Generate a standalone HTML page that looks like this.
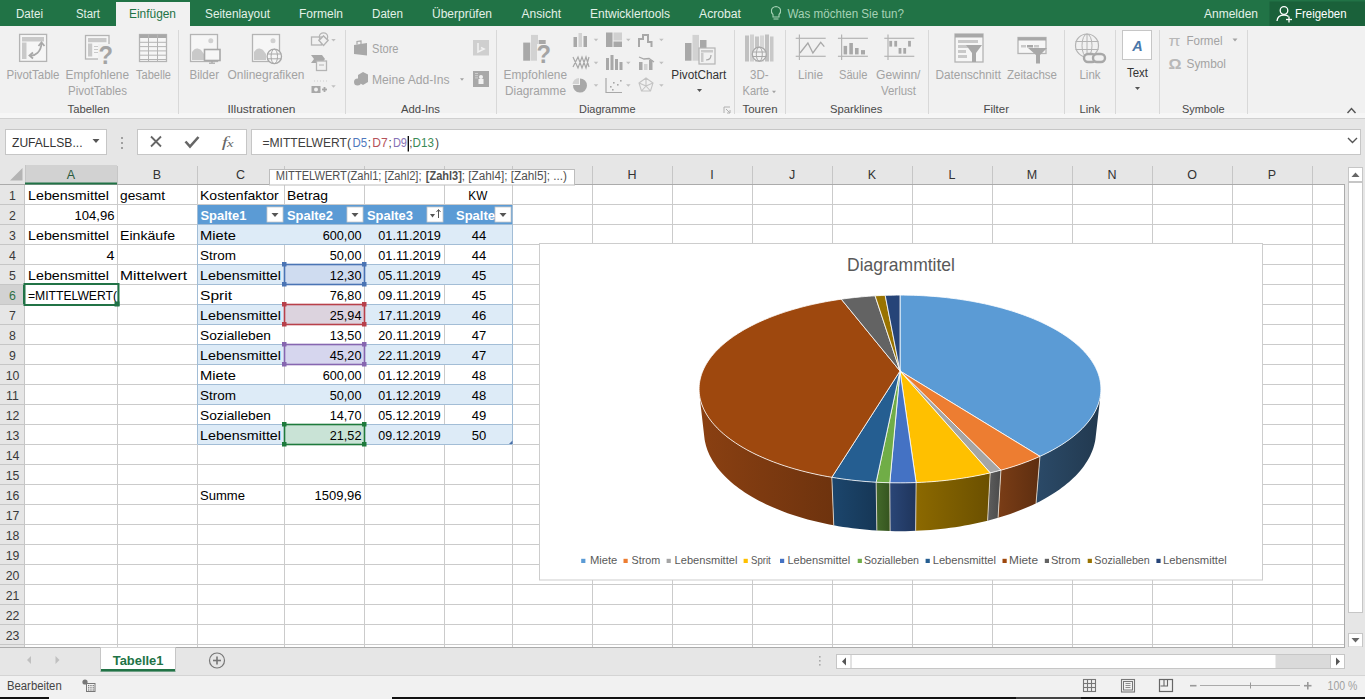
<!DOCTYPE html>
<html><head><meta charset="utf-8"><style>
html,body{margin:0;padding:0;width:1365px;height:699px;overflow:hidden;background:#fff}
svg{display:block;font-family:"Liberation Sans",sans-serif}
</style></head><body>
<svg width="1365" height="699" viewBox="0 0 1365 699">
<rect x="0" y="0" width="1365" height="26" fill="#217346"/>
<rect x="1269.5" y="1.5" width="95.5" height="24.5" fill="#1a613a"/>
<rect x="116" y="2" width="74" height="25" fill="#f1f1f1"/>
<text x="16.0" y="18.0" font-size="12.5" fill="#e3f1e8" textLength="27.0" lengthAdjust="spacingAndGlyphs">Datei</text>
<text x="76.0" y="18.0" font-size="12.5" fill="#e3f1e8" textLength="24.0" lengthAdjust="spacingAndGlyphs">Start</text>
<text x="205.0" y="18.0" font-size="12.5" fill="#e3f1e8" textLength="65.0" lengthAdjust="spacingAndGlyphs">Seitenlayout</text>
<text x="299.0" y="18.0" font-size="12.5" fill="#e3f1e8" textLength="44.0" lengthAdjust="spacingAndGlyphs">Formeln</text>
<text x="372.0" y="18.0" font-size="12.5" fill="#e3f1e8" textLength="31.0" lengthAdjust="spacingAndGlyphs">Daten</text>
<text x="432.0" y="18.0" font-size="12.5" fill="#e3f1e8" textLength="60.0" lengthAdjust="spacingAndGlyphs">Überprüfen</text>
<text x="521.5" y="18.0" font-size="12.5" fill="#e3f1e8" textLength="39.5" lengthAdjust="spacingAndGlyphs">Ansicht</text>
<text x="590.0" y="18.0" font-size="12.5" fill="#e3f1e8" textLength="80.0" lengthAdjust="spacingAndGlyphs">Entwicklertools</text>
<text x="699.0" y="18.0" font-size="12.5" fill="#e3f1e8" textLength="42.0" lengthAdjust="spacingAndGlyphs">Acrobat</text>
<text x="129.0" y="18.0" font-size="12.5" fill="#217346" textLength="47.0" lengthAdjust="spacingAndGlyphs">Einfügen</text>
<text x="787.5" y="18.0" font-size="12.5" fill="#a6d2b5" textLength="116.5" lengthAdjust="spacingAndGlyphs">Was möchten Sie tun?</text>
<text x="1204.0" y="18.0" font-size="12.5" fill="#e3f1e8" textLength="54.0" lengthAdjust="spacingAndGlyphs">Anmelden</text>
<text x="1295.0" y="18.0" font-size="12.5" fill="#ffffff" textLength="51.5" lengthAdjust="spacingAndGlyphs">Freigeben</text>
<path d="M773,14.5 C770.5,12.5 770.5,7 776,6.5 C781.5,7 781.5,12.5 779,14.5 L779,17 L773,17 Z" fill="none" stroke="#a6d2b5" stroke-width="1.1"/>
<line x1="773.5" y1="19" x2="778.5" y2="19" stroke="#a6d2b5" stroke-width="1.1"/>
<circle cx="1284" cy="10.5" r="3.8" fill="none" stroke="#fff" stroke-width="1.3"/>
<path d="M1277,21 C1277.5,16.5 1280,15 1284,15 C1286,15 1287.5,15.5 1288.5,16.5" fill="none" stroke="#fff" stroke-width="1.3"/>
<line x1="1286" y1="19.5" x2="1292" y2="19.5" stroke="#fff" stroke-width="1.3"/>
<line x1="1289" y1="16.5" x2="1289" y2="22.5" stroke="#fff" stroke-width="1.3"/>
<rect x="0" y="26" width="1365" height="92" fill="#f1f1f1"/>
<rect x="0" y="113" width="1365" height="5" fill="#f6f6f6"/>
<line x1="0" y1="118.5" x2="1365" y2="118.5" stroke="#d0d0d0" stroke-width="1"/>
<line x1="178.5" y1="30" x2="178.5" y2="114" stroke="#d8d8d8" stroke-width="1"/>
<line x1="345.5" y1="30" x2="345.5" y2="114" stroke="#d8d8d8" stroke-width="1"/>
<line x1="496.5" y1="30" x2="496.5" y2="114" stroke="#d8d8d8" stroke-width="1"/>
<line x1="734.5" y1="30" x2="734.5" y2="114" stroke="#d8d8d8" stroke-width="1"/>
<line x1="785.5" y1="30" x2="785.5" y2="114" stroke="#d8d8d8" stroke-width="1"/>
<line x1="928.5" y1="30" x2="928.5" y2="114" stroke="#d8d8d8" stroke-width="1"/>
<line x1="1064.5" y1="30" x2="1064.5" y2="114" stroke="#d8d8d8" stroke-width="1"/>
<line x1="1115.5" y1="30" x2="1115.5" y2="114" stroke="#d8d8d8" stroke-width="1"/>
<line x1="1159.5" y1="30" x2="1159.5" y2="114" stroke="#d8d8d8" stroke-width="1"/>
<line x1="1247.5" y1="30" x2="1247.5" y2="114" stroke="#d8d8d8" stroke-width="1"/>
<text x="67.5" y="113.4" font-size="11.3" fill="#4a4a4a" textLength="42.0" lengthAdjust="spacingAndGlyphs">Tabellen</text>
<text x="227.5" y="113.4" font-size="11.3" fill="#4a4a4a" textLength="68.0" lengthAdjust="spacingAndGlyphs">Illustrationen</text>
<text x="401.0" y="113.4" font-size="11.3" fill="#4a4a4a" textLength="39.0" lengthAdjust="spacingAndGlyphs">Add-Ins</text>
<text x="579.0" y="113.4" font-size="11.3" fill="#4a4a4a" textLength="56.5" lengthAdjust="spacingAndGlyphs">Diagramme</text>
<text x="742.5" y="113.4" font-size="11.3" fill="#4a4a4a" textLength="35.0" lengthAdjust="spacingAndGlyphs">Touren</text>
<text x="830.0" y="113.4" font-size="11.3" fill="#4a4a4a" textLength="52.5" lengthAdjust="spacingAndGlyphs">Sparklines</text>
<text x="983.5" y="113.4" font-size="11.3" fill="#4a4a4a" textLength="25.5" lengthAdjust="spacingAndGlyphs">Filter</text>
<text x="1079.5" y="113.4" font-size="11.3" fill="#4a4a4a" textLength="20.5" lengthAdjust="spacingAndGlyphs">Link</text>
<text x="1182.0" y="113.4" font-size="11.3" fill="#4a4a4a" textLength="42.5" lengthAdjust="spacingAndGlyphs">Symbole</text>
<text x="6.5" y="78.5" font-size="12" fill="#a3a3a3" textLength="53.0" lengthAdjust="spacingAndGlyphs">PivotTable</text>
<text x="65.5" y="78.5" font-size="12" fill="#a3a3a3" textLength="63.5" lengthAdjust="spacingAndGlyphs">Empfohlene</text>
<text x="68.0" y="94.5" font-size="12" fill="#a3a3a3" textLength="59.0" lengthAdjust="spacingAndGlyphs">PivotTables</text>
<text x="136.0" y="78.5" font-size="12" fill="#a3a3a3" textLength="35.0" lengthAdjust="spacingAndGlyphs">Tabelle</text>
<text x="189.5" y="78.5" font-size="12" fill="#a3a3a3" textLength="29.5" lengthAdjust="spacingAndGlyphs">Bilder</text>
<text x="227.5" y="78.5" font-size="12" fill="#a3a3a3" textLength="77.0" lengthAdjust="spacingAndGlyphs">Onlinegrafiken</text>
<text x="372.0" y="52.8" font-size="12" fill="#a3a3a3" textLength="26.5" lengthAdjust="spacingAndGlyphs">Store</text>
<text x="372.0" y="83.9" font-size="12" fill="#a3a3a3" textLength="77.5" lengthAdjust="spacingAndGlyphs">Meine Add-Ins</text>
<text x="503.5" y="79.0" font-size="12" fill="#a3a3a3" textLength="63.5" lengthAdjust="spacingAndGlyphs">Empfohlene</text>
<text x="505.0" y="95.0" font-size="12" fill="#a3a3a3" textLength="61.0" lengthAdjust="spacingAndGlyphs">Diagramme</text>
<text x="750.0" y="79.0" font-size="12" fill="#a3a3a3" textLength="18.5" lengthAdjust="spacingAndGlyphs">3D-</text>
<text x="742.5" y="95.0" font-size="12" fill="#a3a3a3" textLength="26.5" lengthAdjust="spacingAndGlyphs">Karte</text>
<text x="798.0" y="79.0" font-size="12" fill="#a3a3a3" textLength="25.0" lengthAdjust="spacingAndGlyphs">Linie</text>
<text x="839.0" y="79.0" font-size="12" fill="#a3a3a3" textLength="28.5" lengthAdjust="spacingAndGlyphs">Säule</text>
<text x="876.0" y="79.0" font-size="12" fill="#a3a3a3" textLength="44.5" lengthAdjust="spacingAndGlyphs">Gewinn/</text>
<text x="881.0" y="95.0" font-size="12" fill="#a3a3a3" textLength="35.0" lengthAdjust="spacingAndGlyphs">Verlust</text>
<text x="935.5" y="79.0" font-size="12" fill="#a3a3a3" textLength="65.5" lengthAdjust="spacingAndGlyphs">Datenschnitt</text>
<text x="1007.0" y="79.0" font-size="12" fill="#a3a3a3" textLength="50.0" lengthAdjust="spacingAndGlyphs">Zeitachse</text>
<text x="1079.5" y="79.0" font-size="12" fill="#a3a3a3" textLength="21.0" lengthAdjust="spacingAndGlyphs">Link</text>
<text x="1186.5" y="44.8" font-size="12" fill="#a3a3a3" textLength="36.0" lengthAdjust="spacingAndGlyphs">Formel</text>
<text x="1186.5" y="68.0" font-size="12" fill="#a3a3a3" textLength="39.5" lengthAdjust="spacingAndGlyphs">Symbol</text>
<text x="1127.0" y="76.5" font-size="12" fill="#333" textLength="21.0" lengthAdjust="spacingAndGlyphs">Text</text>
<text x="671.3" y="78.8" font-size="12" fill="#333" textLength="55.0" lengthAdjust="spacingAndGlyphs">PivotChart</text>
<path d="M697.0,89.0 L702.0,89.0 L699.5,92.0 Z" fill="#555"/>
<path d="M1135.0,87.0 L1140.0,87.0 L1137.5,90.0 Z" fill="#555"/>
<path d="M772.0,90.75 L776.0,90.75 L774,93.25 Z" fill="#a3a3a3"/>
<path d="M460.0,78.25 L464.0,78.25 L462,80.75 Z" fill="#a3a3a3"/>
<path d="M1232.5,38.5 L1237.5,38.5 L1235,41.5 Z" fill="#a3a3a3"/>
<path d="M1347.5,113 L1351.5,108.5 L1355.5,113" fill="none" stroke="#555" stroke-width="1.4"/>
<path d="M724,107 L730,107 M724,107 L724,113 M726,109 L730,113 M730,110 L730,113 L727,113" fill="none" stroke="#b0b0b0" stroke-width="1"/>
<rect x="0" y="119" width="1365" height="46" fill="#e6e6e6"/>
<rect x="5.5" y="129.5" width="101" height="25" fill="#fff" stroke="#c6c6c6" stroke-width="1"/>
<text x="12.0" y="146.8" font-size="12.5" fill="#333" textLength="70.5" lengthAdjust="spacingAndGlyphs">ZUFALLSB...</text>
<path d="M92.5,139.0 L99.5,139.0 L96,143.0 Z" fill="#555"/>
<rect x="121" y="137" width="2" height="2" fill="#a0a0a0"/>
<rect x="121" y="142" width="2" height="2" fill="#a0a0a0"/>
<rect x="121" y="147" width="2" height="2" fill="#a0a0a0"/>
<rect x="137.5" y="129.5" width="109" height="25" fill="#fff" stroke="#c6c6c6" stroke-width="1"/>
<path d="M151,136.5 L161,146.5 M161,136.5 L151,146.5" fill="none" stroke="#666" stroke-width="1.8"/>
<path d="M185.5,141.5 L190,146.5 L198.5,137" fill="none" stroke="#666" stroke-width="2.6"/>
<text x="221.8" y="147.0" font-size="14" fill="#666" textLength="6.0" lengthAdjust="spacingAndGlyphs" font-style="italic" font-family="Liberation Serif">f</text>
<text x="227.0" y="147.0" font-size="11" fill="#666" textLength="6.5" lengthAdjust="spacingAndGlyphs" font-style="italic" font-family="Liberation Serif">x</text>
<rect x="251.5" y="129.5" width="1109" height="25" fill="#fff" stroke="#c6c6c6" stroke-width="1"/>
<path d="M1348,138 L1352.5,142.5 L1357,138" fill="none" stroke="#555" stroke-width="1.4"/>
<rect x="0" y="165" width="1345" height="19" fill="#e6e6e6"/>
<rect x="25" y="165" width="92" height="19" fill="#d2d2d2"/>
<path d="M22.5,168 L22.5,180.5 L10,180.5 Z" fill="#b4b4b4"/>
<line x1="117.5" y1="166" x2="117.5" y2="184" stroke="#c6c6c6" stroke-width="1"/>
<line x1="197.5" y1="166" x2="197.5" y2="184" stroke="#c6c6c6" stroke-width="1"/>
<line x1="284.5" y1="166" x2="284.5" y2="184" stroke="#c6c6c6" stroke-width="1"/>
<line x1="364.5" y1="166" x2="364.5" y2="184" stroke="#c6c6c6" stroke-width="1"/>
<line x1="444.5" y1="166" x2="444.5" y2="184" stroke="#c6c6c6" stroke-width="1"/>
<line x1="512.5" y1="166" x2="512.5" y2="184" stroke="#c6c6c6" stroke-width="1"/>
<line x1="592.5" y1="166" x2="592.5" y2="184" stroke="#c6c6c6" stroke-width="1"/>
<line x1="672.5" y1="166" x2="672.5" y2="184" stroke="#c6c6c6" stroke-width="1"/>
<line x1="752.5" y1="166" x2="752.5" y2="184" stroke="#c6c6c6" stroke-width="1"/>
<line x1="832.5" y1="166" x2="832.5" y2="184" stroke="#c6c6c6" stroke-width="1"/>
<line x1="912.5" y1="166" x2="912.5" y2="184" stroke="#c6c6c6" stroke-width="1"/>
<line x1="992.5" y1="166" x2="992.5" y2="184" stroke="#c6c6c6" stroke-width="1"/>
<line x1="1072.5" y1="166" x2="1072.5" y2="184" stroke="#c6c6c6" stroke-width="1"/>
<line x1="1152.5" y1="166" x2="1152.5" y2="184" stroke="#c6c6c6" stroke-width="1"/>
<line x1="1232.5" y1="166" x2="1232.5" y2="184" stroke="#c6c6c6" stroke-width="1"/>
<line x1="1312.5" y1="166" x2="1312.5" y2="184" stroke="#c6c6c6" stroke-width="1"/>
<line x1="25.5" y1="165" x2="25.5" y2="184" stroke="#c6c6c6" stroke-width="1"/>
<line x1="0" y1="184.5" x2="1345" y2="184.5" stroke="#ababab" stroke-width="1"/>
<rect x="25" y="182.5" width="92" height="2" fill="#217346"/>
<text x="71.0" y="179.0" font-size="12.5" fill="#2a5a3c" text-anchor="middle">A</text>
<text x="157.0" y="179.0" font-size="12.5" fill="#333" text-anchor="middle">B</text>
<text x="240.5" y="179.0" font-size="12.5" fill="#333" text-anchor="middle">C</text>
<text x="324.0" y="179.0" font-size="12.5" fill="#333" text-anchor="middle">D</text>
<text x="404.0" y="179.0" font-size="12.5" fill="#333" text-anchor="middle">E</text>
<text x="478.0" y="179.0" font-size="12.5" fill="#333" text-anchor="middle">F</text>
<text x="552.0" y="179.0" font-size="12.5" fill="#333" text-anchor="middle">G</text>
<text x="632.0" y="179.0" font-size="12.5" fill="#333" text-anchor="middle">H</text>
<text x="712.0" y="179.0" font-size="12.5" fill="#333" text-anchor="middle">I</text>
<text x="792.0" y="179.0" font-size="12.5" fill="#333" text-anchor="middle">J</text>
<text x="872.0" y="179.0" font-size="12.5" fill="#333" text-anchor="middle">K</text>
<text x="952.0" y="179.0" font-size="12.5" fill="#333" text-anchor="middle">L</text>
<text x="1032.0" y="179.0" font-size="12.5" fill="#333" text-anchor="middle">M</text>
<text x="1112.0" y="179.0" font-size="12.5" fill="#333" text-anchor="middle">N</text>
<text x="1192.0" y="179.0" font-size="12.5" fill="#333" text-anchor="middle">O</text>
<text x="1272.0" y="179.0" font-size="12.5" fill="#333" text-anchor="middle">P</text>
<rect x="0" y="185" width="25" height="462" fill="#e6e6e6"/>
<rect x="0" y="285" width="25" height="19" fill="#d2d2d2"/>
<line x1="24.5" y1="185" x2="24.5" y2="647" stroke="#c6c6c6" stroke-width="1"/>
<line x1="0" y1="204.5" x2="25" y2="204.5" stroke="#c6c6c6" stroke-width="1"/>
<text x="12.5" y="200.3" font-size="12.3" fill="#3a3a3a" text-anchor="middle">1</text>
<line x1="0" y1="224.5" x2="25" y2="224.5" stroke="#c6c6c6" stroke-width="1"/>
<text x="12.5" y="220.3" font-size="12.3" fill="#3a3a3a" text-anchor="middle">2</text>
<line x1="0" y1="244.5" x2="25" y2="244.5" stroke="#c6c6c6" stroke-width="1"/>
<text x="12.5" y="240.3" font-size="12.3" fill="#3a3a3a" text-anchor="middle">3</text>
<line x1="0" y1="264.5" x2="25" y2="264.5" stroke="#c6c6c6" stroke-width="1"/>
<text x="12.5" y="260.3" font-size="12.3" fill="#3a3a3a" text-anchor="middle">4</text>
<line x1="0" y1="284.5" x2="25" y2="284.5" stroke="#c6c6c6" stroke-width="1"/>
<text x="12.5" y="280.3" font-size="12.3" fill="#3a3a3a" text-anchor="middle">5</text>
<line x1="0" y1="304.5" x2="25" y2="304.5" stroke="#c6c6c6" stroke-width="1"/>
<text x="12.5" y="300.3" font-size="12.3" fill="#2e7045" text-anchor="middle">6</text>
<line x1="0" y1="324.5" x2="25" y2="324.5" stroke="#c6c6c6" stroke-width="1"/>
<text x="12.5" y="320.3" font-size="12.3" fill="#3a3a3a" text-anchor="middle">7</text>
<line x1="0" y1="344.5" x2="25" y2="344.5" stroke="#c6c6c6" stroke-width="1"/>
<text x="12.5" y="340.3" font-size="12.3" fill="#3a3a3a" text-anchor="middle">8</text>
<line x1="0" y1="364.5" x2="25" y2="364.5" stroke="#c6c6c6" stroke-width="1"/>
<text x="12.5" y="360.3" font-size="12.3" fill="#3a3a3a" text-anchor="middle">9</text>
<line x1="0" y1="384.5" x2="25" y2="384.5" stroke="#c6c6c6" stroke-width="1"/>
<text x="12.5" y="380.3" font-size="12.3" fill="#3a3a3a" text-anchor="middle">10</text>
<line x1="0" y1="404.5" x2="25" y2="404.5" stroke="#c6c6c6" stroke-width="1"/>
<text x="12.5" y="400.3" font-size="12.3" fill="#3a3a3a" text-anchor="middle">11</text>
<line x1="0" y1="424.5" x2="25" y2="424.5" stroke="#c6c6c6" stroke-width="1"/>
<text x="12.5" y="420.3" font-size="12.3" fill="#3a3a3a" text-anchor="middle">12</text>
<line x1="0" y1="444.5" x2="25" y2="444.5" stroke="#c6c6c6" stroke-width="1"/>
<text x="12.5" y="440.3" font-size="12.3" fill="#3a3a3a" text-anchor="middle">13</text>
<line x1="0" y1="464.5" x2="25" y2="464.5" stroke="#c6c6c6" stroke-width="1"/>
<text x="12.5" y="460.3" font-size="12.3" fill="#3a3a3a" text-anchor="middle">14</text>
<line x1="0" y1="484.5" x2="25" y2="484.5" stroke="#c6c6c6" stroke-width="1"/>
<text x="12.5" y="480.3" font-size="12.3" fill="#3a3a3a" text-anchor="middle">15</text>
<line x1="0" y1="504.5" x2="25" y2="504.5" stroke="#c6c6c6" stroke-width="1"/>
<text x="12.5" y="500.3" font-size="12.3" fill="#3a3a3a" text-anchor="middle">16</text>
<line x1="0" y1="524.5" x2="25" y2="524.5" stroke="#c6c6c6" stroke-width="1"/>
<text x="12.5" y="520.3" font-size="12.3" fill="#3a3a3a" text-anchor="middle">17</text>
<line x1="0" y1="544.5" x2="25" y2="544.5" stroke="#c6c6c6" stroke-width="1"/>
<text x="12.5" y="540.3" font-size="12.3" fill="#3a3a3a" text-anchor="middle">18</text>
<line x1="0" y1="564.5" x2="25" y2="564.5" stroke="#c6c6c6" stroke-width="1"/>
<text x="12.5" y="560.3" font-size="12.3" fill="#3a3a3a" text-anchor="middle">19</text>
<line x1="0" y1="584.5" x2="25" y2="584.5" stroke="#c6c6c6" stroke-width="1"/>
<text x="12.5" y="580.3" font-size="12.3" fill="#3a3a3a" text-anchor="middle">20</text>
<line x1="0" y1="604.5" x2="25" y2="604.5" stroke="#c6c6c6" stroke-width="1"/>
<text x="12.5" y="600.3" font-size="12.3" fill="#3a3a3a" text-anchor="middle">21</text>
<line x1="0" y1="624.5" x2="25" y2="624.5" stroke="#c6c6c6" stroke-width="1"/>
<text x="12.5" y="620.3" font-size="12.3" fill="#3a3a3a" text-anchor="middle">22</text>
<line x1="0" y1="644.5" x2="25" y2="644.5" stroke="#c6c6c6" stroke-width="1"/>
<text x="12.5" y="640.3" font-size="12.3" fill="#3a3a3a" text-anchor="middle">23</text>
<rect x="23" y="285" width="2" height="19" fill="#217346"/>
<rect x="25.5" y="185" width="1320" height="462" fill="#ffffff"/>
<line x1="25" y1="204.5" x2="1345" y2="204.5" stroke="#cbcbcb" stroke-width="1"/>
<line x1="25" y1="224.5" x2="1345" y2="224.5" stroke="#cbcbcb" stroke-width="1"/>
<line x1="25" y1="244.5" x2="1345" y2="244.5" stroke="#cbcbcb" stroke-width="1"/>
<line x1="25" y1="264.5" x2="1345" y2="264.5" stroke="#cbcbcb" stroke-width="1"/>
<line x1="25" y1="284.5" x2="1345" y2="284.5" stroke="#cbcbcb" stroke-width="1"/>
<line x1="25" y1="304.5" x2="1345" y2="304.5" stroke="#cbcbcb" stroke-width="1"/>
<line x1="25" y1="324.5" x2="1345" y2="324.5" stroke="#cbcbcb" stroke-width="1"/>
<line x1="25" y1="344.5" x2="1345" y2="344.5" stroke="#cbcbcb" stroke-width="1"/>
<line x1="25" y1="364.5" x2="1345" y2="364.5" stroke="#cbcbcb" stroke-width="1"/>
<line x1="25" y1="384.5" x2="1345" y2="384.5" stroke="#cbcbcb" stroke-width="1"/>
<line x1="25" y1="404.5" x2="1345" y2="404.5" stroke="#cbcbcb" stroke-width="1"/>
<line x1="25" y1="424.5" x2="1345" y2="424.5" stroke="#cbcbcb" stroke-width="1"/>
<line x1="25" y1="444.5" x2="1345" y2="444.5" stroke="#cbcbcb" stroke-width="1"/>
<line x1="25" y1="464.5" x2="1345" y2="464.5" stroke="#cbcbcb" stroke-width="1"/>
<line x1="25" y1="484.5" x2="1345" y2="484.5" stroke="#cbcbcb" stroke-width="1"/>
<line x1="25" y1="504.5" x2="1345" y2="504.5" stroke="#cbcbcb" stroke-width="1"/>
<line x1="25" y1="524.5" x2="1345" y2="524.5" stroke="#cbcbcb" stroke-width="1"/>
<line x1="25" y1="544.5" x2="1345" y2="544.5" stroke="#cbcbcb" stroke-width="1"/>
<line x1="25" y1="564.5" x2="1345" y2="564.5" stroke="#cbcbcb" stroke-width="1"/>
<line x1="25" y1="584.5" x2="1345" y2="584.5" stroke="#cbcbcb" stroke-width="1"/>
<line x1="25" y1="604.5" x2="1345" y2="604.5" stroke="#cbcbcb" stroke-width="1"/>
<line x1="25" y1="624.5" x2="1345" y2="624.5" stroke="#cbcbcb" stroke-width="1"/>
<line x1="25" y1="644.5" x2="1345" y2="644.5" stroke="#cbcbcb" stroke-width="1"/>
<line x1="117.5" y1="185" x2="117.5" y2="647" stroke="#cbcbcb" stroke-width="1"/>
<line x1="197.5" y1="185" x2="197.5" y2="647" stroke="#cbcbcb" stroke-width="1"/>
<line x1="284.5" y1="185" x2="284.5" y2="647" stroke="#cbcbcb" stroke-width="1"/>
<line x1="364.5" y1="185" x2="364.5" y2="647" stroke="#cbcbcb" stroke-width="1"/>
<line x1="444.5" y1="185" x2="444.5" y2="647" stroke="#cbcbcb" stroke-width="1"/>
<line x1="512.5" y1="185" x2="512.5" y2="647" stroke="#cbcbcb" stroke-width="1"/>
<line x1="592.5" y1="185" x2="592.5" y2="647" stroke="#cbcbcb" stroke-width="1"/>
<line x1="672.5" y1="185" x2="672.5" y2="647" stroke="#cbcbcb" stroke-width="1"/>
<line x1="752.5" y1="185" x2="752.5" y2="647" stroke="#cbcbcb" stroke-width="1"/>
<line x1="832.5" y1="185" x2="832.5" y2="647" stroke="#cbcbcb" stroke-width="1"/>
<line x1="912.5" y1="185" x2="912.5" y2="647" stroke="#cbcbcb" stroke-width="1"/>
<line x1="992.5" y1="185" x2="992.5" y2="647" stroke="#cbcbcb" stroke-width="1"/>
<line x1="1072.5" y1="185" x2="1072.5" y2="647" stroke="#cbcbcb" stroke-width="1"/>
<line x1="1152.5" y1="185" x2="1152.5" y2="647" stroke="#cbcbcb" stroke-width="1"/>
<line x1="1232.5" y1="185" x2="1232.5" y2="647" stroke="#cbcbcb" stroke-width="1"/>
<line x1="1312.5" y1="185" x2="1312.5" y2="647" stroke="#cbcbcb" stroke-width="1"/>
<rect x="197.5" y="205" width="315" height="19" fill="#5b9bd5"/>
<rect x="197.5" y="225" width="315" height="20" fill="#ddebf7"/>
<rect x="197.5" y="245" width="315" height="20" fill="#ffffff"/>
<rect x="197.5" y="265" width="315" height="20" fill="#ddebf7"/>
<rect x="197.5" y="285" width="315" height="20" fill="#ffffff"/>
<rect x="197.5" y="305" width="315" height="20" fill="#ddebf7"/>
<rect x="197.5" y="325" width="315" height="20" fill="#ffffff"/>
<rect x="197.5" y="345" width="315" height="20" fill="#ddebf7"/>
<rect x="197.5" y="365" width="315" height="20" fill="#ffffff"/>
<rect x="197.5" y="385" width="315" height="20" fill="#ddebf7"/>
<rect x="197.5" y="405" width="315" height="20" fill="#ffffff"/>
<rect x="197.5" y="425" width="315" height="20" fill="#ddebf7"/>
<line x1="197.5" y1="224.5" x2="512.5" y2="224.5" stroke="#a2bdd6" stroke-width="1"/>
<line x1="197.5" y1="244.5" x2="512.5" y2="244.5" stroke="#a2bdd6" stroke-width="1"/>
<line x1="197.5" y1="264.5" x2="512.5" y2="264.5" stroke="#a2bdd6" stroke-width="1"/>
<line x1="197.5" y1="284.5" x2="512.5" y2="284.5" stroke="#a2bdd6" stroke-width="1"/>
<line x1="197.5" y1="304.5" x2="512.5" y2="304.5" stroke="#a2bdd6" stroke-width="1"/>
<line x1="197.5" y1="324.5" x2="512.5" y2="324.5" stroke="#a2bdd6" stroke-width="1"/>
<line x1="197.5" y1="344.5" x2="512.5" y2="344.5" stroke="#a2bdd6" stroke-width="1"/>
<line x1="197.5" y1="364.5" x2="512.5" y2="364.5" stroke="#a2bdd6" stroke-width="1"/>
<line x1="197.5" y1="384.5" x2="512.5" y2="384.5" stroke="#a2bdd6" stroke-width="1"/>
<line x1="197.5" y1="404.5" x2="512.5" y2="404.5" stroke="#a2bdd6" stroke-width="1"/>
<line x1="197.5" y1="424.5" x2="512.5" y2="424.5" stroke="#a2bdd6" stroke-width="1"/>
<line x1="197.5" y1="444.5" x2="512.5" y2="444.5" stroke="#a2bdd6" stroke-width="1"/>
<line x1="197.5" y1="205" x2="197.5" y2="444" stroke="#a2bdd6" stroke-width="1"/>
<line x1="512.5" y1="205" x2="512.5" y2="444" stroke="#a2bdd6" stroke-width="1"/>
<line x1="284.5" y1="245" x2="284.5" y2="264" stroke="#cbcbcb" stroke-width="1"/>
<line x1="284.5" y1="285" x2="284.5" y2="304" stroke="#cbcbcb" stroke-width="1"/>
<line x1="284.5" y1="325" x2="284.5" y2="344" stroke="#cbcbcb" stroke-width="1"/>
<line x1="284.5" y1="365" x2="284.5" y2="384" stroke="#cbcbcb" stroke-width="1"/>
<line x1="284.5" y1="405" x2="284.5" y2="424" stroke="#cbcbcb" stroke-width="1"/>
<line x1="364.5" y1="245" x2="364.5" y2="264" stroke="#cbcbcb" stroke-width="1"/>
<line x1="364.5" y1="285" x2="364.5" y2="304" stroke="#cbcbcb" stroke-width="1"/>
<line x1="364.5" y1="325" x2="364.5" y2="344" stroke="#cbcbcb" stroke-width="1"/>
<line x1="364.5" y1="365" x2="364.5" y2="384" stroke="#cbcbcb" stroke-width="1"/>
<line x1="364.5" y1="405" x2="364.5" y2="424" stroke="#cbcbcb" stroke-width="1"/>
<line x1="444.5" y1="245" x2="444.5" y2="264" stroke="#cbcbcb" stroke-width="1"/>
<line x1="444.5" y1="285" x2="444.5" y2="304" stroke="#cbcbcb" stroke-width="1"/>
<line x1="444.5" y1="325" x2="444.5" y2="344" stroke="#cbcbcb" stroke-width="1"/>
<line x1="444.5" y1="365" x2="444.5" y2="384" stroke="#cbcbcb" stroke-width="1"/>
<line x1="444.5" y1="405" x2="444.5" y2="424" stroke="#cbcbcb" stroke-width="1"/>
<rect x="267" y="207" width="16" height="15" fill="#ffffff" stroke="#c9c9c9" stroke-width="0.8"/>
<rect x="347" y="207" width="16" height="15" fill="#ffffff" stroke="#c9c9c9" stroke-width="0.8"/>
<rect x="427" y="207" width="16" height="15" fill="#ffffff" stroke="#c9c9c9" stroke-width="0.8"/>
<rect x="495" y="207" width="16" height="15" fill="#ffffff" stroke="#c9c9c9" stroke-width="0.8"/>
<path d="M271.5,213 L278.5,213 L275,217 Z" fill="#555"/>
<path d="M351.5,213 L358.5,213 L355,217 Z" fill="#555"/>
<path d="M499.5,213 L506.5,213 L503,217 Z" fill="#555"/>
<path d="M430,214 L435,214 L432.5,217.5 Z" fill="#555"/>
<line x1="438.5" y1="210" x2="438.5" y2="218" stroke="#555" stroke-width="1"/>
<path d="M436.5,212 L438.5,209.5 L440.5,212" fill="none" stroke="#555" stroke-width="1"/>
<text x="28.0" y="200.2" font-size="13.3" fill="#000" textLength="81.0" lengthAdjust="spacingAndGlyphs">Lebensmittel</text>
<text x="120.0" y="200.2" font-size="13.3" fill="#000" textLength="45.0" lengthAdjust="spacingAndGlyphs">gesamt</text>
<text x="200.0" y="200.2" font-size="13.3" fill="#000" textLength="78.7" lengthAdjust="spacingAndGlyphs">Kostenfaktor</text>
<text x="287.0" y="200.2" font-size="13.3" fill="#000" textLength="41.0" lengthAdjust="spacingAndGlyphs">Betrag</text>
<text x="468.3" y="200.2" font-size="13.3" fill="#000" textLength="19.0" lengthAdjust="spacingAndGlyphs">KW</text>
<text x="74.5" y="220.2" font-size="13.3" fill="#000" textLength="40.0" lengthAdjust="spacingAndGlyphs">104,96</text>
<text x="28.0" y="240.2" font-size="13.3" fill="#000" textLength="81.0" lengthAdjust="spacingAndGlyphs">Lebensmittel</text>
<text x="120.0" y="240.2" font-size="13.3" fill="#000" textLength="55.0" lengthAdjust="spacingAndGlyphs">Einkäufe</text>
<text x="106.5" y="260.2" font-size="13.3" fill="#000" textLength="8.0" lengthAdjust="spacingAndGlyphs">4</text>
<text x="28.0" y="280.2" font-size="13.3" fill="#000" textLength="81.0" lengthAdjust="spacingAndGlyphs">Lebensmittel</text>
<text x="120.0" y="280.2" font-size="13.3" fill="#000" textLength="67.0" lengthAdjust="spacingAndGlyphs">Mittelwert</text>
<text x="200.5" y="220.2" font-size="13.3" fill="#ffffff" font-weight="bold" textLength="46.0" lengthAdjust="spacingAndGlyphs">Spalte1</text>
<text x="287.0" y="220.2" font-size="13.3" fill="#ffffff" font-weight="bold" textLength="46.0" lengthAdjust="spacingAndGlyphs">Spalte2</text>
<text x="367.0" y="220.2" font-size="13.3" fill="#ffffff" font-weight="bold" textLength="46.0" lengthAdjust="spacingAndGlyphs">Spalte3</text>
<text x="456.0" y="220.2" font-size="13.3" fill="#ffffff" font-weight="bold" textLength="39.0" lengthAdjust="spacingAndGlyphs">Spalte</text>
<text x="200.0" y="240.2" font-size="13.3" fill="#000" textLength="36.0" lengthAdjust="spacingAndGlyphs">Miete</text>
<text x="322.7" y="240.2" font-size="13.3" fill="#000" textLength="38.8" lengthAdjust="spacingAndGlyphs">600,00</text>
<text x="378.3" y="240.2" font-size="13.3" fill="#000" textLength="62.5" lengthAdjust="spacingAndGlyphs">01.11.2019</text>
<text x="471.8" y="240.2" font-size="13.3" fill="#000" textLength="14.5" lengthAdjust="spacingAndGlyphs">44</text>
<text x="200.0" y="260.2" font-size="13.3" fill="#000" textLength="36.0" lengthAdjust="spacingAndGlyphs">Strom</text>
<text x="329.7" y="260.2" font-size="13.3" fill="#000" textLength="31.8" lengthAdjust="spacingAndGlyphs">50,00</text>
<text x="378.3" y="260.2" font-size="13.3" fill="#000" textLength="62.5" lengthAdjust="spacingAndGlyphs">01.11.2019</text>
<text x="471.8" y="260.2" font-size="13.3" fill="#000" textLength="14.5" lengthAdjust="spacingAndGlyphs">44</text>
<text x="200.0" y="280.2" font-size="13.3" fill="#000" textLength="81.0" lengthAdjust="spacingAndGlyphs">Lebensmittel</text>
<text x="329.7" y="280.2" font-size="13.3" fill="#000" textLength="31.8" lengthAdjust="spacingAndGlyphs">12,30</text>
<text x="378.3" y="280.2" font-size="13.3" fill="#000" textLength="62.5" lengthAdjust="spacingAndGlyphs">05.11.2019</text>
<text x="471.8" y="280.2" font-size="13.3" fill="#000" textLength="14.5" lengthAdjust="spacingAndGlyphs">45</text>
<text x="200.0" y="300.2" font-size="13.3" fill="#000" textLength="32.0" lengthAdjust="spacingAndGlyphs">Sprit</text>
<text x="329.7" y="300.2" font-size="13.3" fill="#000" textLength="31.8" lengthAdjust="spacingAndGlyphs">76,80</text>
<text x="378.3" y="300.2" font-size="13.3" fill="#000" textLength="62.5" lengthAdjust="spacingAndGlyphs">09.11.2019</text>
<text x="471.8" y="300.2" font-size="13.3" fill="#000" textLength="14.5" lengthAdjust="spacingAndGlyphs">45</text>
<text x="200.0" y="320.2" font-size="13.3" fill="#000" textLength="81.0" lengthAdjust="spacingAndGlyphs">Lebensmittel</text>
<text x="329.7" y="320.2" font-size="13.3" fill="#000" textLength="31.8" lengthAdjust="spacingAndGlyphs">25,94</text>
<text x="378.3" y="320.2" font-size="13.3" fill="#000" textLength="62.5" lengthAdjust="spacingAndGlyphs">17.11.2019</text>
<text x="471.8" y="320.2" font-size="13.3" fill="#000" textLength="14.5" lengthAdjust="spacingAndGlyphs">46</text>
<text x="200.0" y="340.2" font-size="13.3" fill="#000" textLength="71.0" lengthAdjust="spacingAndGlyphs">Sozialleben</text>
<text x="329.7" y="340.2" font-size="13.3" fill="#000" textLength="31.8" lengthAdjust="spacingAndGlyphs">13,50</text>
<text x="378.3" y="340.2" font-size="13.3" fill="#000" textLength="62.5" lengthAdjust="spacingAndGlyphs">20.11.2019</text>
<text x="471.8" y="340.2" font-size="13.3" fill="#000" textLength="14.5" lengthAdjust="spacingAndGlyphs">47</text>
<text x="200.0" y="360.2" font-size="13.3" fill="#000" textLength="81.0" lengthAdjust="spacingAndGlyphs">Lebensmittel</text>
<text x="329.7" y="360.2" font-size="13.3" fill="#000" textLength="31.8" lengthAdjust="spacingAndGlyphs">45,20</text>
<text x="378.3" y="360.2" font-size="13.3" fill="#000" textLength="62.5" lengthAdjust="spacingAndGlyphs">22.11.2019</text>
<text x="471.8" y="360.2" font-size="13.3" fill="#000" textLength="14.5" lengthAdjust="spacingAndGlyphs">47</text>
<text x="200.0" y="380.2" font-size="13.3" fill="#000" textLength="36.0" lengthAdjust="spacingAndGlyphs">Miete</text>
<text x="322.7" y="380.2" font-size="13.3" fill="#000" textLength="38.8" lengthAdjust="spacingAndGlyphs">600,00</text>
<text x="378.3" y="380.2" font-size="13.3" fill="#000" textLength="62.5" lengthAdjust="spacingAndGlyphs">01.12.2019</text>
<text x="471.8" y="380.2" font-size="13.3" fill="#000" textLength="14.5" lengthAdjust="spacingAndGlyphs">48</text>
<text x="200.0" y="400.2" font-size="13.3" fill="#000" textLength="36.0" lengthAdjust="spacingAndGlyphs">Strom</text>
<text x="329.7" y="400.2" font-size="13.3" fill="#000" textLength="31.8" lengthAdjust="spacingAndGlyphs">50,00</text>
<text x="378.3" y="400.2" font-size="13.3" fill="#000" textLength="62.5" lengthAdjust="spacingAndGlyphs">01.12.2019</text>
<text x="471.8" y="400.2" font-size="13.3" fill="#000" textLength="14.5" lengthAdjust="spacingAndGlyphs">48</text>
<text x="200.0" y="420.2" font-size="13.3" fill="#000" textLength="71.0" lengthAdjust="spacingAndGlyphs">Sozialleben</text>
<text x="329.7" y="420.2" font-size="13.3" fill="#000" textLength="31.8" lengthAdjust="spacingAndGlyphs">14,70</text>
<text x="378.3" y="420.2" font-size="13.3" fill="#000" textLength="62.5" lengthAdjust="spacingAndGlyphs">05.12.2019</text>
<text x="471.8" y="420.2" font-size="13.3" fill="#000" textLength="14.5" lengthAdjust="spacingAndGlyphs">49</text>
<text x="200.0" y="440.2" font-size="13.3" fill="#000" textLength="81.0" lengthAdjust="spacingAndGlyphs">Lebensmittel</text>
<text x="329.7" y="440.2" font-size="13.3" fill="#000" textLength="31.8" lengthAdjust="spacingAndGlyphs">21,52</text>
<text x="378.3" y="440.2" font-size="13.3" fill="#000" textLength="62.5" lengthAdjust="spacingAndGlyphs">09.12.2019</text>
<text x="471.8" y="440.2" font-size="13.3" fill="#000" textLength="14.5" lengthAdjust="spacingAndGlyphs">50</text>
<text x="200.0" y="500.2" font-size="13.3" fill="#000" textLength="45.0" lengthAdjust="spacingAndGlyphs">Summe</text>
<text x="314.5" y="500.2" font-size="13.3" fill="#000" textLength="47.0" lengthAdjust="spacingAndGlyphs">1509,96</text>
<path d="M509,444 L512.5,444 L512.5,440.5 Z" fill="#4a6fa8"/>
<rect x="539.5" y="243.5" width="723" height="336.5" fill="#ffffff" stroke="#cdcdcd" stroke-width="1"/>
<text x="847.0" y="271.0" font-size="18.5" fill="#595959" textLength="108.0" lengthAdjust="spacingAndGlyphs">Diagrammtitel</text>
<defs><linearGradient id="sg0" gradientUnits="userSpaceOnUse" x1="1036.1" y1="0" x2="1100.6" y2="0"><stop offset="0" stop-color="#2b4a68"/><stop offset="1" stop-color="#22394f"/></linearGradient><linearGradient id="sg1" gradientUnits="userSpaceOnUse" x1="998.1" y1="0" x2="1040.0" y2="0"><stop offset="0" stop-color="#7a3d16"/><stop offset="1" stop-color="#5e2e10"/></linearGradient><linearGradient id="sg2" gradientUnits="userSpaceOnUse" x1="987.6" y1="0" x2="1000.9" y2="0"><stop offset="0" stop-color="#5e5e5e"/><stop offset="1" stop-color="#4a4a4a"/></linearGradient><linearGradient id="sg3" gradientUnits="userSpaceOnUse" x1="915.6" y1="0" x2="990.2" y2="0"><stop offset="0" stop-color="#8c6900"/><stop offset="1" stop-color="#6b5000"/></linearGradient><linearGradient id="sg4" gradientUnits="userSpaceOnUse" x1="889.8" y1="0" x2="916.1" y2="0"><stop offset="0" stop-color="#2a4677"/><stop offset="1" stop-color="#1f355c"/></linearGradient><linearGradient id="sg5" gradientUnits="userSpaceOnUse" x1="876.2" y1="0" x2="890.1" y2="0"><stop offset="0" stop-color="#446a2b"/><stop offset="1" stop-color="#35541f"/></linearGradient><linearGradient id="sg6" gradientUnits="userSpaceOnUse" x1="831.8" y1="0" x2="876.8" y2="0"><stop offset="0" stop-color="#1c466d"/><stop offset="1" stop-color="#163756"/></linearGradient><linearGradient id="sg7" gradientUnits="userSpaceOnUse" x1="699.4" y1="0" x2="833.8" y2="0"><stop offset="0" stop-color="#8a4012"/><stop offset="1" stop-color="#6e330e"/></linearGradient></defs>
<path d="M1100.63,394.00 L1100.36,395.94 L1100.01,397.88 L1099.57,399.82 L1099.04,401.77 L1098.43,403.72 L1097.72,405.67 L1096.92,407.62 L1096.03,409.56 L1095.05,411.51 L1093.97,413.45 L1092.80,415.39 L1091.54,417.33 L1090.18,419.26 L1088.73,421.18 L1087.19,423.09 L1085.55,425.00 L1083.81,426.89 L1081.98,428.77 L1080.05,430.64 L1078.03,432.50 L1075.92,434.34 L1073.70,436.16 L1071.40,437.97 L1069.00,439.76 L1066.50,441.53 L1063.92,443.27 L1061.24,445.00 L1058.47,446.70 L1055.60,448.38 L1052.65,450.03 L1049.61,451.65 L1046.48,453.24 L1043.26,454.81 L1039.96,456.34 L1036.07,503.25 L1039.29,501.63 L1042.43,499.98 L1045.49,498.30 L1048.46,496.59 L1051.34,494.85 L1054.14,493.08 L1056.84,491.29 L1059.47,489.47 L1062.00,487.62 L1064.44,485.76 L1066.79,483.87 L1069.05,481.96 L1071.21,480.03 L1073.29,478.09 L1075.27,476.13 L1077.16,474.15 L1078.96,472.16 L1080.67,470.16 L1082.29,468.15 L1083.81,466.13 L1085.24,464.09 L1086.58,462.05 L1087.83,460.00 L1088.98,457.95 L1090.05,455.89 L1091.03,453.83 L1091.91,451.77 L1092.71,449.70 L1093.42,447.64 L1094.04,445.57 L1094.57,443.51 L1095.02,441.45 L1095.38,439.40 L1095.66,437.34 Z" fill="url(#sg0)"/>
<path d="M1039.96,456.34 L1036.44,457.90 L1032.83,459.42 L1029.13,460.91 L1025.35,462.36 L1021.48,463.76 L1017.53,465.13 L1013.50,466.45 L1009.39,467.73 L1005.20,468.97 L1000.95,470.16 L998.07,517.80 L1002.21,516.55 L1006.29,515.25 L1010.29,513.90 L1014.21,512.51 L1018.06,511.07 L1021.82,509.59 L1025.51,508.06 L1029.12,506.50 L1032.64,504.89 L1036.07,503.25 Z" fill="url(#sg1)"/>
<path d="M1000.95,470.16 L995.62,471.56 L990.18,472.88 L987.60,520.67 L992.89,519.27 L998.07,517.80 Z" fill="url(#sg2)"/>
<path d="M990.18,472.88 L985.58,473.93 L980.92,474.92 L976.20,475.85 L971.42,476.74 L966.59,477.56 L961.71,478.33 L956.78,479.04 L951.81,479.69 L946.79,480.29 L941.74,480.82 L936.66,481.29 L931.55,481.70 L926.42,482.05 L921.27,482.34 L916.10,482.57 L915.63,530.86 L920.65,530.62 L925.65,530.32 L930.64,529.95 L935.60,529.52 L940.53,529.02 L945.44,528.46 L950.31,527.84 L955.14,527.15 L959.93,526.40 L964.67,525.59 L969.37,524.72 L974.01,523.80 L978.60,522.81 L983.13,521.77 L987.60,520.67 Z" fill="url(#sg3)"/>
<path d="M916.10,482.57 L910.85,482.73 L905.59,482.83 L900.32,482.87 L895.06,482.84 L889.79,482.75 L890.09,531.05 L895.20,531.14 L900.31,531.17 L905.42,531.14 L910.53,531.03 L915.63,530.86 Z" fill="url(#sg4)"/>
<path d="M889.79,482.75 L882.96,482.53 L876.15,482.21 L876.85,530.48 L883.46,530.82 L890.09,531.05 Z" fill="url(#sg5)"/>
<path d="M876.15,482.21 L871.11,481.89 L866.08,481.52 L861.08,481.09 L856.11,480.60 L851.17,480.05 L846.27,479.45 L841.41,478.79 L836.59,478.07 L831.82,477.30 L833.78,525.31 L838.42,526.13 L843.10,526.88 L847.83,527.58 L852.59,528.21 L857.38,528.79 L862.21,529.30 L867.07,529.76 L871.95,530.15 L876.85,530.48 Z" fill="url(#sg6)"/>
<path d="M831.82,477.30 L827.21,476.49 L822.65,475.63 L818.14,474.72 L813.70,473.77 L809.31,472.76 L804.98,471.70 L800.71,470.60 L796.51,469.46 L792.38,468.27 L788.33,467.03 L784.34,465.75 L780.43,464.43 L776.60,463.07 L772.85,461.68 L769.18,460.24 L765.60,458.77 L762.10,457.26 L758.68,455.72 L755.36,454.14 L752.12,452.54 L748.97,450.90 L745.92,449.24 L742.96,447.54 L740.09,445.82 L737.32,444.08 L734.64,442.31 L732.06,440.52 L729.58,438.71 L727.19,436.88 L724.91,435.03 L722.72,433.16 L720.62,431.28 L718.63,429.38 L716.74,427.47 L714.94,425.54 L713.25,423.61 L711.65,421.66 L710.15,419.71 L708.74,417.74 L707.44,415.78 L706.23,413.80 L705.12,411.82 L704.11,409.84 L703.19,407.86 L702.36,405.88 L701.63,403.89 L701.00,401.91 L700.45,399.93 L700.00,397.95 L699.64,395.97 L699.37,394.00 L704.34,437.34 L704.62,439.43 L704.99,441.53 L705.45,443.62 L706.00,445.72 L706.64,447.82 L707.37,449.93 L708.19,452.03 L709.11,454.13 L710.12,456.23 L711.22,458.32 L712.41,460.41 L713.70,462.49 L715.09,464.57 L716.57,466.63 L718.14,468.69 L719.81,470.74 L721.58,472.77 L723.44,474.79 L725.39,476.80 L727.45,478.79 L729.59,480.76 L731.83,482.72 L734.17,484.65 L736.60,486.56 L739.13,488.45 L741.75,490.32 L744.46,492.16 L747.26,493.97 L750.15,495.76 L753.13,497.52 L756.20,499.24 L759.36,500.93 L762.61,502.59 L765.93,504.22 L769.35,505.81 L772.84,507.36 L776.42,508.87 L780.07,510.34 L783.80,511.78 L787.61,513.17 L791.49,514.51 L795.44,515.81 L799.46,517.06 L803.54,518.27 L807.69,519.43 L811.90,520.54 L816.17,521.60 L820.49,522.61 L824.87,523.56 L829.30,524.47 L833.78,525.31 Z" fill="url(#sg7)"/>
<line x1="1039.96" y1="456.34" x2="1036.07" y2="503.25" stroke="#f0e6d8" stroke-width="0.8"/>
<line x1="1000.95" y1="470.16" x2="998.07" y2="517.80" stroke="#f0e6d8" stroke-width="0.8"/>
<line x1="990.18" y1="472.88" x2="987.60" y2="520.67" stroke="#f0e6d8" stroke-width="0.8"/>
<line x1="916.10" y1="482.57" x2="915.63" y2="530.86" stroke="#f0e6d8" stroke-width="0.8"/>
<line x1="889.79" y1="482.75" x2="890.09" y2="531.05" stroke="#f0e6d8" stroke-width="0.8"/>
<line x1="876.15" y1="482.21" x2="876.85" y2="530.48" stroke="#f0e6d8" stroke-width="0.8"/>
<line x1="831.82" y1="477.30" x2="833.78" y2="525.31" stroke="#f0e6d8" stroke-width="0.8"/>
<path d="M900,371 L900.00,295.09 L903.33,295.11 L906.66,295.14 L909.99,295.21 L913.32,295.30 L916.65,295.42 L919.97,295.56 L923.29,295.73 L926.60,295.92 L929.91,296.14 L933.21,296.38 L936.50,296.65 L939.79,296.95 L943.06,297.27 L946.33,297.62 L949.59,298.00 L952.84,298.40 L956.07,298.82 L959.30,299.27 L962.51,299.75 L965.70,300.25 L968.89,300.78 L972.06,301.34 L975.21,301.92 L978.34,302.52 L981.46,303.16 L984.56,303.81 L987.64,304.49 L990.70,305.20 L993.74,305.94 L996.75,306.70 L999.75,307.48 L1002.72,308.29 L1005.67,309.13 L1008.59,309.99 L1011.48,310.87 L1014.35,311.78 L1017.19,312.72 L1020.01,313.68 L1022.79,314.67 L1025.54,315.68 L1028.26,316.71 L1030.95,317.77 L1033.61,318.86 L1036.23,319.97 L1038.81,321.10 L1041.36,322.26 L1043.87,323.44 L1046.35,324.65 L1048.78,325.88 L1051.17,327.14 L1053.52,328.42 L1055.83,329.72 L1058.10,331.04 L1060.32,332.39 L1062.49,333.76 L1064.62,335.15 L1066.70,336.57 L1068.73,338.01 L1070.71,339.47 L1072.64,340.95 L1074.51,342.45 L1076.33,343.98 L1078.10,345.52 L1079.81,347.09 L1081.46,348.68 L1083.06,350.28 L1084.59,351.91 L1086.07,353.56 L1087.48,355.22 L1088.83,356.90 L1090.11,358.60 L1091.33,360.32 L1092.48,362.06 L1093.56,363.81 L1094.57,365.58 L1095.52,367.36 L1096.39,369.16 L1097.19,370.97 L1097.91,372.80 L1098.56,374.64 L1099.13,376.50 L1099.63,378.36 L1100.04,380.24 L1100.38,382.13 L1100.64,384.03 L1100.81,385.94 L1100.90,387.85 L1100.91,389.78 L1100.83,391.71 L1100.67,393.65 L1100.42,395.60 L1100.08,397.55 L1099.65,399.50 L1099.14,401.46 L1098.53,403.41 L1097.83,405.37 L1097.04,407.33 L1096.16,409.29 L1095.18,411.25 L1094.11,413.20 L1092.95,415.16 L1091.69,417.10 L1090.34,419.04 L1088.89,420.97 L1087.35,422.90 L1085.71,424.81 L1083.97,426.72 L1082.14,428.61 L1080.21,430.49 L1078.19,432.36 L1076.07,434.21 L1073.85,436.05 L1071.54,437.86 L1069.13,439.66 L1066.63,441.44 L1064.03,443.20 L1061.34,444.93 L1058.56,446.64 L1055.68,448.33 L1052.72,449.99 L1049.66,451.62 L1046.51,453.23 L1043.28,454.80 L1039.96,456.34 Z" fill="#5b9bd5" stroke="#ffffff" stroke-width="0.8" stroke-linejoin="round"/>
<path d="M900,371 L1039.96,456.34 L1036.44,457.90 L1032.83,459.42 L1029.13,460.91 L1025.35,462.36 L1021.48,463.76 L1017.53,465.13 L1013.50,466.45 L1009.39,467.73 L1005.20,468.97 L1000.95,470.16 Z" fill="#ed7d31" stroke="#ffffff" stroke-width="0.8" stroke-linejoin="round"/>
<path d="M900,371 L1000.95,470.16 L995.62,471.56 L990.18,472.88 Z" fill="#a5a5a5" stroke="#ffffff" stroke-width="0.8" stroke-linejoin="round"/>
<path d="M900,371 L990.18,472.88 L985.58,473.93 L980.92,474.92 L976.20,475.85 L971.42,476.74 L966.59,477.56 L961.71,478.33 L956.78,479.04 L951.81,479.69 L946.79,480.29 L941.74,480.82 L936.66,481.29 L931.55,481.70 L926.42,482.05 L921.27,482.34 L916.10,482.57 Z" fill="#ffc000" stroke="#ffffff" stroke-width="0.8" stroke-linejoin="round"/>
<path d="M900,371 L916.10,482.57 L910.85,482.73 L905.59,482.83 L900.32,482.87 L895.06,482.84 L889.79,482.75 Z" fill="#4472c4" stroke="#ffffff" stroke-width="0.8" stroke-linejoin="round"/>
<path d="M900,371 L889.79,482.75 L882.96,482.53 L876.15,482.21 Z" fill="#70ad47" stroke="#ffffff" stroke-width="0.8" stroke-linejoin="round"/>
<path d="M900,371 L876.15,482.21 L871.11,481.89 L866.08,481.52 L861.08,481.09 L856.11,480.60 L851.17,480.05 L846.27,479.45 L841.41,478.79 L836.59,478.07 L831.82,477.30 Z" fill="#255e91" stroke="#ffffff" stroke-width="0.8" stroke-linejoin="round"/>
<path d="M900,371 L831.82,477.30 L827.27,476.50 L822.76,475.65 L818.31,474.76 L813.91,473.81 L809.57,472.82 L805.29,471.78 L801.08,470.70 L796.92,469.57 L792.84,468.40 L788.82,467.19 L784.88,465.93 L781.01,464.63 L777.21,463.30 L773.49,461.92 L769.85,460.51 L766.30,459.06 L762.82,457.58 L759.43,456.06 L756.13,454.52 L752.91,452.94 L749.78,451.33 L746.74,449.69 L743.79,448.03 L740.93,446.34 L738.16,444.62 L735.49,442.88 L732.91,441.12 L730.43,439.34 L728.04,437.54 L725.74,435.72 L723.54,433.88 L721.44,432.02 L719.43,430.15 L717.52,428.27 L715.71,426.37 L713.99,424.47 L712.36,422.55 L710.84,420.62 L709.41,418.69 L708.07,416.75 L706.83,414.80 L705.68,412.85 L704.63,410.90 L703.67,408.94 L702.81,406.98 L702.04,405.02 L701.35,403.06 L700.76,401.10 L700.26,399.15 L699.85,397.19 L699.53,395.24 L699.30,393.30 L699.15,391.36 L699.09,389.43 L699.11,387.51 L699.21,385.59 L699.40,383.68 L699.67,381.79 L700.02,379.90 L700.46,378.02 L700.96,376.16 L701.55,374.31 L702.21,372.47 L702.95,370.64 L703.76,368.83 L704.65,367.04 L705.60,365.25 L706.63,363.49 L707.73,361.74 L708.89,360.01 L710.12,358.29 L711.41,356.60 L712.77,354.92 L714.20,353.26 L715.68,351.61 L717.23,349.99 L718.83,348.39 L720.50,346.81 L722.22,345.24 L723.99,343.70 L725.82,342.18 L727.71,340.68 L729.65,339.20 L731.64,337.75 L733.67,336.31 L735.76,334.90 L737.90,333.51 L740.08,332.14 L742.31,330.80 L744.58,329.48 L746.90,328.18 L749.26,326.91 L751.66,325.66 L754.10,324.43 L756.58,323.23 L759.10,322.05 L761.65,320.90 L764.25,319.77 L766.87,318.66 L769.53,317.58 L772.23,316.52 L774.95,315.49 L777.71,314.49 L780.50,313.50 L783.32,312.55 L786.17,311.62 L789.04,310.71 L791.94,309.83 L794.87,308.97 L797.82,308.14 L800.79,307.34 L803.79,306.56 L806.81,305.80 L809.86,305.07 L812.92,304.37 L816.00,303.69 L819.10,303.04 L822.23,302.41 L825.36,301.81 L828.52,301.24 L831.69,300.69 L834.87,300.16 L838.07,299.66 L841.29,299.19 Z" fill="#9e480e" stroke="#ffffff" stroke-width="0.8" stroke-linejoin="round"/>
<path d="M900,371 L841.29,299.19 L844.62,298.73 L847.97,298.30 L851.33,297.89 L854.70,297.51 L858.08,297.16 L861.47,296.84 L864.86,296.54 L868.27,296.27 L871.68,296.03 L875.10,295.82 Z" fill="#636363" stroke="#ffffff" stroke-width="0.8" stroke-linejoin="round"/>
<path d="M900,371 L875.10,295.82 L878.46,295.63 L881.82,295.48 L885.19,295.35 Z" fill="#997300" stroke="#ffffff" stroke-width="0.8" stroke-linejoin="round"/>
<path d="M900,371 L885.19,295.35 L888.89,295.24 L892.59,295.16 L896.30,295.11 L900.00,295.09 Z" fill="#264478" stroke="#ffffff" stroke-width="0.8" stroke-linejoin="round"/>
<rect x="581.2" y="558.8" width="4.2" height="4.2" fill="#5b9bd5"/>
<text x="589.9" y="564.2" font-size="11" fill="#595959" textLength="27.4" lengthAdjust="spacingAndGlyphs">Miete</text>
<rect x="623.5" y="558.8" width="4.2" height="4.2" fill="#ed7d31"/>
<text x="631.5" y="564.2" font-size="11" fill="#595959" textLength="28.7" lengthAdjust="spacingAndGlyphs">Strom</text>
<rect x="666.6" y="558.8" width="4.2" height="4.2" fill="#a5a5a5"/>
<text x="674.6" y="564.2" font-size="11" fill="#595959" textLength="62.8" lengthAdjust="spacingAndGlyphs">Lebensmittel</text>
<rect x="743.6" y="558.8" width="4.2" height="4.2" fill="#ffc000"/>
<text x="751.0" y="564.2" font-size="11" fill="#595959" textLength="19.7" lengthAdjust="spacingAndGlyphs">Sprit</text>
<rect x="780" y="558.8" width="4.2" height="4.2" fill="#4472c4"/>
<text x="787.4" y="564.2" font-size="11" fill="#595959" textLength="62.8" lengthAdjust="spacingAndGlyphs">Lebensmittel</text>
<rect x="857.7" y="558.8" width="4.2" height="4.2" fill="#70ad47"/>
<text x="863.9" y="564.2" font-size="11" fill="#595959" textLength="55.1" lengthAdjust="spacingAndGlyphs">Sozialleben</text>
<rect x="925.6" y="558.8" width="4.2" height="4.2" fill="#255e91"/>
<text x="932.7" y="564.2" font-size="11" fill="#595959" textLength="63.3" lengthAdjust="spacingAndGlyphs">Lebensmittel</text>
<rect x="1002.5" y="558.8" width="4.2" height="4.2" fill="#9e480e"/>
<text x="1009.0" y="564.2" font-size="11" fill="#595959" textLength="29.0" lengthAdjust="spacingAndGlyphs">Miete</text>
<rect x="1044.8" y="558.8" width="4.2" height="4.2" fill="#636363"/>
<text x="1050.9" y="564.2" font-size="11" fill="#595959" textLength="29.6" lengthAdjust="spacingAndGlyphs">Strom</text>
<rect x="1087.7" y="558.8" width="4.2" height="4.2" fill="#997300"/>
<text x="1094.3" y="564.2" font-size="11" fill="#595959" textLength="55.5" lengthAdjust="spacingAndGlyphs">Sozialleben</text>
<rect x="1156.4" y="558.8" width="4.2" height="4.2" fill="#264478"/>
<text x="1163.0" y="564.2" font-size="11" fill="#595959" textLength="63.7" lengthAdjust="spacingAndGlyphs">Lebensmittel</text>
<rect x="285" y="265" width="79" height="19" fill="#cfdcf0"/>
<rect x="285" y="305" width="79" height="19" fill="#dcd3de"/>
<rect x="285" y="345" width="79" height="19" fill="#d6d6ee"/>
<rect x="285" y="425" width="79" height="19" fill="#c9e3d6"/>
<text x="329.7" y="280.2" font-size="13.3" fill="#000" textLength="31.8" lengthAdjust="spacingAndGlyphs">12,30</text>
<text x="329.7" y="320.2" font-size="13.3" fill="#000" textLength="31.8" lengthAdjust="spacingAndGlyphs">25,94</text>
<text x="329.7" y="360.2" font-size="13.3" fill="#000" textLength="31.8" lengthAdjust="spacingAndGlyphs">45,20</text>
<text x="329.7" y="440.2" font-size="13.3" fill="#000" textLength="31.8" lengthAdjust="spacingAndGlyphs">21,52</text>
<rect x="284.5" y="264.5" width="80" height="20" fill="none" stroke="#4a74b4" stroke-width="1.6"/>
<rect x="282" y="262" width="4.5" height="4.5" fill="#4a74b4"/>
<rect x="362" y="262" width="4.5" height="4.5" fill="#4a74b4"/>
<rect x="282" y="282" width="4.5" height="4.5" fill="#4a74b4"/>
<rect x="362" y="282" width="4.5" height="4.5" fill="#4a74b4"/>
<rect x="284.5" y="304.5" width="80" height="20" fill="none" stroke="#b8404a" stroke-width="1.6"/>
<rect x="282" y="302" width="4.5" height="4.5" fill="#b8404a"/>
<rect x="362" y="302" width="4.5" height="4.5" fill="#b8404a"/>
<rect x="282" y="322" width="4.5" height="4.5" fill="#b8404a"/>
<rect x="362" y="322" width="4.5" height="4.5" fill="#b8404a"/>
<rect x="284.5" y="344.5" width="80" height="20" fill="none" stroke="#8666b0" stroke-width="1.6"/>
<rect x="282" y="342" width="4.5" height="4.5" fill="#8666b0"/>
<rect x="362" y="342" width="4.5" height="4.5" fill="#8666b0"/>
<rect x="282" y="362" width="4.5" height="4.5" fill="#8666b0"/>
<rect x="362" y="362" width="4.5" height="4.5" fill="#8666b0"/>
<rect x="284.5" y="424.5" width="80" height="20" fill="none" stroke="#1e7a3c" stroke-width="1.6"/>
<rect x="282" y="422" width="4.5" height="4.5" fill="#1e7a3c"/>
<rect x="362" y="422" width="4.5" height="4.5" fill="#1e7a3c"/>
<rect x="282" y="442" width="4.5" height="4.5" fill="#1e7a3c"/>
<rect x="362" y="442" width="4.5" height="4.5" fill="#1e7a3c"/>
<rect x="25" y="285" width="92" height="19" fill="#ffffff"/>
<text x="28.0" y="300.2" font-size="13.3" fill="#000" textLength="89.0" lengthAdjust="spacingAndGlyphs">=MITTELWERT(</text>
<rect x="24.5" y="284" width="94" height="21" fill="none" stroke="#217346" stroke-width="2"/>
<rect x="114.5" y="301.5" width="5" height="5" fill="#217346"/>
<text x="262.5" y="146.8" font-size="12.8" fill="#404040" textLength="88.5" lengthAdjust="spacingAndGlyphs">=MITTELWERT(</text>
<text x="352.6" y="146.8" font-size="12.8" fill="#4f78bd" textLength="14.6" lengthAdjust="spacingAndGlyphs">D5</text>
<text x="367.8" y="146.8" font-size="12.8" fill="#404040" textLength="3.2" lengthAdjust="spacingAndGlyphs">;</text>
<text x="372.3" y="146.8" font-size="12.8" fill="#b5525a" textLength="15.4" lengthAdjust="spacingAndGlyphs">D7</text>
<text x="388.6" y="146.8" font-size="12.8" fill="#404040" textLength="3.2" lengthAdjust="spacingAndGlyphs">;</text>
<text x="392.9" y="146.8" font-size="12.8" fill="#8572b5" textLength="14.1" lengthAdjust="spacingAndGlyphs">D9</text>
<line x1="408.3" y1="136" x2="408.3" y2="151.5" stroke="#000" stroke-width="1.3"/>
<text x="409.2" y="146.8" font-size="12.8" fill="#404040" textLength="3.2" lengthAdjust="spacingAndGlyphs">;</text>
<text x="412.6" y="146.8" font-size="12.8" fill="#3a8a56" textLength="21.3" lengthAdjust="spacingAndGlyphs">D13</text>
<text x="435.3" y="146.8" font-size="12.8" fill="#404040" textLength="3.7" lengthAdjust="spacingAndGlyphs">)</text>
<rect x="269.5" y="169.5" width="305" height="15.5" fill="#ffffff" stroke="#bdbdbd" stroke-width="1"/>
<text x="275.8" y="179.7" font-size="12" fill="#505050" textLength="145.7" lengthAdjust="spacingAndGlyphs">MITTELWERT(Zahl1; [Zahl2];</text>
<text x="425.8" y="179.7" font-size="12" fill="#505050" font-weight="bold" textLength="36.0" lengthAdjust="spacingAndGlyphs">[Zahl3]</text>
<text x="461.8" y="179.7" font-size="12" fill="#505050" textLength="105.2" lengthAdjust="spacingAndGlyphs">; [Zahl4]; [Zahl5]; ...)</text>
<rect x="1345" y="165" width="20" height="482" fill="#e6e6e6"/>
<line x1="1344.5" y1="185" x2="1344.5" y2="647" stroke="#ababab" stroke-width="1"/>
<rect x="1348.5" y="167.5" width="14" height="14" fill="#ffffff" stroke="#c6c6c6" stroke-width="1"/>
<path d="M1351.5,177 L1355.5,172.5 L1359.5,177 Z" fill="#666"/>
<rect x="1348.5" y="182.5" width="14" height="430" fill="#ffffff" stroke="#c6c6c6" stroke-width="1"/>
<rect x="1348.5" y="633.5" width="14" height="13.5" fill="#ffffff" stroke="#c6c6c6" stroke-width="1"/>
<path d="M1351.5,638 L1359.5,638 L1355.5,642.5 Z" fill="#666"/>
<rect x="0" y="647" width="1365" height="28.5" fill="#e6e6e6"/>
<line x1="0" y1="647.5" x2="1345" y2="647.5" stroke="#ababab" stroke-width="1"/>
<path d="M31,656 L31,664 L27,660 Z" fill="#c0c0c0"/>
<path d="M55.5,656 L55.5,664 L59.5,660 Z" fill="#c0c0c0"/>
<rect x="100.5" y="647.5" width="75" height="23" fill="#ffffff"/>
<rect x="100.5" y="669" width="75" height="2.6" fill="#217346"/>
<line x1="100.5" y1="647" x2="100.5" y2="671" stroke="#c6c6c6" stroke-width="1"/>
<line x1="175.5" y1="647" x2="175.5" y2="671" stroke="#c6c6c6" stroke-width="1"/>
<text x="112.7" y="664.8" font-size="12.5" fill="#217346" font-weight="bold" textLength="50.8" lengthAdjust="spacingAndGlyphs">Tabelle1</text>
<circle cx="217" cy="660.5" r="7.5" fill="none" stroke="#777" stroke-width="1.2"/>
<line x1="213" y1="660.5" x2="221" y2="660.5" stroke="#777" stroke-width="1.6"/>
<line x1="217" y1="656.5" x2="217" y2="664.5" stroke="#777" stroke-width="1.6"/>
<rect x="819" y="656" width="1.6" height="1.6" fill="#aaa"/>
<rect x="819" y="660" width="1.6" height="1.6" fill="#aaa"/>
<rect x="819" y="664" width="1.6" height="1.6" fill="#aaa"/>
<rect x="836.5" y="654.5" width="508" height="14" fill="#ffffff" stroke="#c6c6c6" stroke-width="1"/>
<rect x="1275.5" y="655" width="55" height="13" fill="#dadada"/>
<line x1="851" y1="655" x2="851" y2="668" stroke="#c6c6c6" stroke-width="1"/>
<path d="M846,657.5 L846,665.5 L842,661.5 Z" fill="#555"/>
<rect x="1330.5" y="654.5" width="14" height="14" fill="#ffffff" stroke="#c6c6c6" stroke-width="1"/>
<path d="M1336,657.5 L1336,665.5 L1340,661.5 Z" fill="#555"/>
<rect x="0" y="675.5" width="1365" height="23.5" fill="#f1f1f1"/>
<line x1="0" y1="675.5" x2="1365" y2="675.5" stroke="#d4d4d4" stroke-width="1"/>
<text x="7.0" y="689.8" font-size="12" fill="#444" textLength="54.7" lengthAdjust="spacingAndGlyphs">Bearbeiten</text>
<circle cx="85" cy="682" r="2.6" fill="#777"/>
<rect x="86.5" y="683.5" width="8.5" height="8" fill="none" stroke="#777" stroke-width="1"/>
<rect x="88.0" y="685.0" width="1.3" height="1.2" fill="#777"/>
<rect x="90.3" y="685.0" width="1.3" height="1.2" fill="#777"/>
<rect x="92.6" y="685.0" width="1.3" height="1.2" fill="#777"/>
<rect x="88.0" y="687.2" width="1.3" height="1.2" fill="#777"/>
<rect x="90.3" y="687.2" width="1.3" height="1.2" fill="#777"/>
<rect x="92.6" y="687.2" width="1.3" height="1.2" fill="#777"/>
<rect x="88.0" y="689.4" width="1.3" height="1.2" fill="#777"/>
<rect x="90.3" y="689.4" width="1.3" height="1.2" fill="#777"/>
<rect x="92.6" y="689.4" width="1.3" height="1.2" fill="#777"/>
<rect x="0" y="697" width="49" height="2" fill="#111"/>
<rect x="392" y="697" width="624" height="2" fill="#111"/>
<rect x="1016" y="697" width="65" height="2" fill="#444"/>
<rect x="1081" y="697" width="284" height="2" fill="#111"/>
<rect x="1083.5" y="679.5" width="12" height="12" fill="none" stroke="#777" stroke-width="1.1"/>
<line x1="1087.5" y1="679.5" x2="1087.5" y2="691.5" stroke="#777" stroke-width="1.1"/>
<line x1="1083.5" y1="683.5" x2="1095.5" y2="683.5" stroke="#777" stroke-width="1.1"/>
<line x1="1091.5" y1="679.5" x2="1091.5" y2="691.5" stroke="#777" stroke-width="1.1"/>
<line x1="1083.5" y1="687.5" x2="1095.5" y2="687.5" stroke="#777" stroke-width="1.1"/>
<rect x="1121.5" y="679.5" width="13" height="12.5" fill="none" stroke="#777" stroke-width="1.1"/>
<rect x="1123.5" y="681.5" width="9" height="8.5" fill="none" stroke="#777" stroke-width="1"/>
<line x1="1125.5" y1="683.5" x2="1130.5" y2="683.5" stroke="#777" stroke-width="0.8"/>
<line x1="1125.5" y1="685.5" x2="1130.5" y2="685.5" stroke="#777" stroke-width="0.8"/>
<line x1="1125.5" y1="687.5" x2="1130.5" y2="687.5" stroke="#777" stroke-width="0.8"/>
<rect x="1159.5" y="679.5" width="13" height="12" fill="none" stroke="#666" stroke-width="1.2"/>
<path d="M1160.5,686 L1167.5,686 L1167.5,679.5 M1164,679.5 L1164,686" fill="none" stroke="#666" stroke-width="1.1"/>
<line x1="1190" y1="685.7" x2="1196.5" y2="685.7" stroke="#999" stroke-width="1.6"/>
<line x1="1200" y1="685.5" x2="1300" y2="685.5" stroke="#aaa" stroke-width="1"/>
<line x1="1250.5" y1="682.5" x2="1250.5" y2="688.5" stroke="#999" stroke-width="1"/>
<line x1="1304" y1="685.7" x2="1311.5" y2="685.7" stroke="#999" stroke-width="1.6"/>
<line x1="1307.8" y1="682" x2="1307.8" y2="689.5" stroke="#999" stroke-width="1.6"/>
<text x="1327.6" y="689.8" font-size="12" fill="#a0a0a0" textLength="29.7" lengthAdjust="spacingAndGlyphs">100 %</text>
<rect x="19.6" y="34.4" width="27" height="27" fill="#f6f6f6" stroke="#b4b4b4" stroke-width="1.3"/>
<rect x="22" y="37" width="22" height="4.5" fill="#c9c9c9"/>
<rect x="22" y="42.5" width="4.5" height="16.5" fill="#c9c9c9"/>
<path d="M30.5,55.5 C35,56 41,52 41.5,43.5" fill="none" stroke="#a8a8a8" stroke-width="1.8"/>
<path d="M38.5,46 L41.5,42.5 L44.5,46" fill="none" stroke="#a8a8a8" stroke-width="1.8"/>
<path d="M33,52.5 L29.5,55.5 L33,58.5" fill="none" stroke="#a8a8a8" stroke-width="1.8"/>
<rect x="85.5" y="35.5" width="23.5" height="23.5" fill="#f6f6f6" stroke="#b4b4b4" stroke-width="1.3"/>
<rect x="88" y="38" width="18.5" height="4.2" fill="#c9c9c9"/>
<rect x="88" y="43.5" width="4.2" height="13" fill="#c9c9c9"/>
<line x1="94" y1="46.5" x2="102" y2="46.5" stroke="#c9c9c9" stroke-width="1"/>
<line x1="94" y1="49.5" x2="102" y2="49.5" stroke="#c9c9c9" stroke-width="1"/>
<line x1="94" y1="52.5" x2="102" y2="52.5" stroke="#c9c9c9" stroke-width="1"/>
<rect x="98" y="44" width="15" height="19" fill="#f1f1f1"/>
<text x="98.4" y="63.6" font-size="26" fill="#a4a4a4" font-weight="bold" textLength="14.5" lengthAdjust="spacingAndGlyphs">?</text>
<rect x="139.5" y="34.5" width="27" height="27" fill="#f6f6f6" stroke="#b4b4b4" stroke-width="1.3"/>
<rect x="139.5" y="34.5" width="27" height="3.5" fill="#a8a8a8"/>
<line x1="148.5" y1="34.5" x2="148.5" y2="61.5" stroke="#b4b4b4" stroke-width="1"/>
<line x1="157.5" y1="34.5" x2="157.5" y2="61.5" stroke="#b4b4b4" stroke-width="1"/>
<line x1="139.5" y1="42.3" x2="166.5" y2="42.3" stroke="#b4b4b4" stroke-width="1"/>
<line x1="139.5" y1="46.6" x2="166.5" y2="46.6" stroke="#b4b4b4" stroke-width="1"/>
<line x1="139.5" y1="50.9" x2="166.5" y2="50.9" stroke="#b4b4b4" stroke-width="1"/>
<line x1="139.5" y1="55.2" x2="166.5" y2="55.2" stroke="#b4b4b4" stroke-width="1"/>
<line x1="139.5" y1="59.5" x2="166.5" y2="59.5" stroke="#b4b4b4" stroke-width="1"/>
<rect x="190.5" y="34.5" width="27" height="27" fill="#f6f6f6" stroke="#b4b4b4" stroke-width="1.3"/>
<path d="M192,60 L192,52 C195,48 197,47.5 201,50 L204,54 L204,60 Z" fill="#c9c9c9"/>
<circle cx="210.8" cy="40.7" r="2.5" fill="#d0d0d0"/>
<rect x="204.5" y="49.5" width="15.5" height="11" fill="#f6f6f6" stroke="#a8a8a8" stroke-width="1.6"/>
<line x1="212" y1="60.5" x2="212" y2="63" stroke="#a8a8a8" stroke-width="1.3"/>
<line x1="209" y1="63.2" x2="215" y2="63.2" stroke="#a8a8a8" stroke-width="1.2"/>
<rect x="252.5" y="34.5" width="27" height="27" fill="#f6f6f6" stroke="#b4b4b4" stroke-width="1.3"/>
<path d="M254,60 L254,52 C257,48 259,47.5 263,50 L266,54 L266,60 Z" fill="#c9c9c9"/>
<circle cx="273" cy="40.7" r="2.5" fill="#d0d0d0"/>
<circle cx="274.3" cy="56.4" r="7.2" fill="#f6f6f6" stroke="#a8a8a8" stroke-width="1.3"/>
<ellipse cx="274.3" cy="56.4" rx="3.2" ry="7.2" fill="none" stroke="#a8a8a8" stroke-width="1"/>
<line x1="267.2" y1="54" x2="281.4" y2="54" stroke="#a8a8a8" stroke-width="1"/>
<line x1="267.2" y1="58.8" x2="281.4" y2="58.8" stroke="#a8a8a8" stroke-width="1"/>
<rect x="311.5" y="37" width="10" height="8" fill="none" stroke="#b4b4b4" stroke-width="1.3"/>
<circle cx="323.5" cy="37" r="4.2" fill="none" stroke="#b4b4b4" stroke-width="1.2"/>
<path d="M319,40 L323.5,36 L328,40 L323.5,45 Z" fill="#f1f1f1" stroke="#b4b4b4" stroke-width="1.3"/>
<path d="M319,40.5 L323.5,36 L328,40.5 L323.5,45.5 Z" fill="#f1f1f1" stroke="#b4b4b4" stroke-width="1.3"/>
<path d="M331.25,38.95 L335.75,38.95 L333.5,41.45 Z" fill="#c0c0c0"/>
<path d="M311,55 L322,55 L325,59 L322,63 L311,63 L314,59 Z" fill="#a8a8a8"/>
<rect x="316.5" y="61" width="10" height="9.5" fill="#f1f1f1" stroke="#b4b4b4" stroke-width="1.3"/>
<line x1="319" y1="65" x2="324" y2="65" stroke="#b4b4b4" stroke-width="1"/>
<rect x="314" y="80.5" width="1" height="1" fill="#cfcfcf"/>
<rect x="317" y="80.5" width="1" height="1" fill="#cfcfcf"/>
<rect x="320" y="80.5" width="1" height="1" fill="#cfcfcf"/>
<rect x="323" y="80.5" width="1" height="1" fill="#cfcfcf"/>
<rect x="326" y="80.5" width="1" height="1" fill="#cfcfcf"/>
<rect x="311.5" y="86" width="9" height="7" fill="#a8a8a8"/>
<circle cx="316" cy="89.5" r="2" fill="#f1f1f1"/>
<line x1="322" y1="89.5" x2="327" y2="89.5" stroke="#a8a8a8" stroke-width="1.8"/>
<line x1="324.5" y1="87" x2="324.5" y2="92" stroke="#a8a8a8" stroke-width="1.8"/>
<path d="M331.25,85.35 L335.75,85.35 L333.5,87.85 Z" fill="#c0c0c0"/>
<path d="M354,45 L367,43 L367,55.5 L354,54 Z" fill="#a8a8a8"/>
<path d="M357,44.5 L357,41.5 L361,41 L361,44" fill="none" stroke="#a8a8a8" stroke-width="1.2"/>
<path d="M358,75 L363,72 L368,74.5 L368,82 L363,85 L358,82 Z" fill="#a8a8a8"/>
<circle cx="357.5" cy="82" r="3.5" fill="#a8a8a8"/>
<rect x="473" y="40" width="16" height="15.5" fill="#cfcfcf"/>
<path d="M478,43 L478,52 L484,49 L481,47.5" fill="none" stroke="#f1f1f1" stroke-width="1.6"/>
<rect x="473" y="71" width="16" height="16" fill="#a8a8a8"/>
<circle cx="481" cy="77" r="2" fill="#f1f1f1"/>
<rect x="478.5" y="79" width="5" height="5" fill="#f1f1f1"/>
<line x1="475" y1="73.5" x2="478" y2="73.5" stroke="#d8d8d8" stroke-width="0.8"/>
<line x1="475" y1="75.7" x2="478" y2="75.7" stroke="#d8d8d8" stroke-width="0.8"/>
<line x1="475" y1="77.9" x2="478" y2="77.9" stroke="#d8d8d8" stroke-width="0.8"/>
<rect x="523.2" y="42.6" width="7" height="18.1" fill="#a8a8a8"/>
<rect x="531" y="34.9" width="7" height="25.8" fill="#d2d2d2"/>
<rect x="538.7" y="40" width="7" height="20.7" fill="#a8a8a8"/>
<rect x="537" y="44" width="14" height="19" fill="#f1f1f1"/>
<text x="536.5" y="63.3" font-size="26" fill="#a4a4a4" font-weight="bold" textLength="14.5" lengthAdjust="spacingAndGlyphs">?</text>
<rect x="573.5" y="37" width="3.5" height="10" fill="#a8a8a8"/>
<rect x="578.5" y="33" width="3.5" height="14" fill="#d2d2d2"/>
<rect x="583.5" y="36" width="3.5" height="11" fill="#a8a8a8"/>
<rect x="606" y="32.5" width="6.5" height="14.5" fill="#a8a8a8"/>
<rect x="613.5" y="32.5" width="8.5" height="8" fill="#d0d0d0"/>
<rect x="613.5" y="41.5" width="8.5" height="5.5" fill="#a8a8a8"/>
<path d="M639,47 L639,39 L643,39 L643,35 L648,35 L648,42 L651.5,42 L651.5,47" fill="none" stroke="#a8a8a8" stroke-width="2"/>
<path d="M573,57 L578,68 L582,57 L586,68 L589,57 M573,67 L578,57 L582,68 L586,57 L589,67" fill="none" stroke="#a8a8a8" stroke-width="1.2"/>
<rect x="606" y="58" width="3" height="12" fill="#a8a8a8"/>
<rect x="610.5" y="55" width="3" height="15" fill="#a8a8a8"/>
<rect x="615" y="59" width="3" height="11" fill="#a8a8a8"/>
<rect x="619.5" y="62" width="3" height="8" fill="#a8a8a8"/>
<rect x="639" y="62" width="3.5" height="8" fill="#a8a8a8"/>
<rect x="644" y="64" width="3.5" height="6" fill="#d2d2d2"/>
<rect x="649" y="60" width="3.5" height="10" fill="#a8a8a8"/>
<path d="M639,57 L644,59 L649,58.5 L654,62" fill="none" stroke="#a8a8a8" stroke-width="1.3"/>
<path d="M580,85 L580,78.5 A7,7 0 1 1 573,85 Z" fill="#a8a8a8"/>
<path d="M579,84 L579,78 A6.5,6.5 0 0 0 572.5,84 Z" fill="#d2d2d2"/>
<path d="M606,78 L606,92.5 L622,92.5" fill="none" stroke="#a8a8a8" stroke-width="1.2"/>
<rect x="610" y="86" width="1.6" height="1.6" fill="#a8a8a8"/>
<rect x="613" y="82" width="1.6" height="1.6" fill="#a8a8a8"/>
<rect x="617" y="84" width="1.6" height="1.6" fill="#a8a8a8"/>
<rect x="620" y="80" width="1.6" height="1.6" fill="#a8a8a8"/>
<rect x="612" y="89" width="1.6" height="1.6" fill="#a8a8a8"/>
<path d="M646,78 L653,83 L650.5,91 L641.5,91 L639,83 Z M646,78 L646,86 M653,83 L646,86 L650.5,91 M641.5,91 L646,86 L639,83" fill="none" stroke="#c4c4c4" stroke-width="1.1"/>
<path d="M593.75,38.75 L598.25,38.75 L596,41.25 Z" fill="#c0c0c0"/>
<path d="M626.05,38.75 L630.55,38.75 L628.3,41.25 Z" fill="#c0c0c0"/>
<path d="M659.15,38.75 L663.65,38.75 L661.4,41.25 Z" fill="#c0c0c0"/>
<path d="M593.75,61.75 L598.25,61.75 L596,64.25 Z" fill="#c0c0c0"/>
<path d="M626.05,61.75 L630.55,61.75 L628.3,64.25 Z" fill="#c0c0c0"/>
<path d="M659.15,61.75 L663.65,61.75 L661.4,64.25 Z" fill="#c0c0c0"/>
<path d="M593.75,84.25 L598.25,84.25 L596,86.75 Z" fill="#c0c0c0"/>
<path d="M626.05,84.25 L630.55,84.25 L628.3,86.75 Z" fill="#c0c0c0"/>
<path d="M659.15,84.25 L663.65,84.25 L661.4,86.75 Z" fill="#c0c0c0"/>
<rect x="685" y="43" width="6.5" height="17.7" fill="#a8a8a8"/>
<rect x="692.5" y="34.9" width="6.5" height="25.8" fill="#d2d2d2"/>
<rect x="700" y="40" width="6.5" height="8" fill="#a8a8a8"/>
<rect x="699" y="48" width="16" height="16" fill="#f1f1f1" stroke="#b4b4b4" stroke-width="1.2"/>
<rect x="701" y="50" width="12" height="2.5" fill="#c9c9c9"/>
<rect x="701" y="53" width="2.5" height="9" fill="#c9c9c9"/>
<path d="M706,60 C709,60 711,58 711,55" fill="none" stroke="#a8a8a8" stroke-width="1.2"/>
<rect x="745" y="35.5" width="4" height="26" fill="#c0c0c0"/>
<rect x="750" y="34.5" width="4" height="27" fill="#d0d0d0"/>
<rect x="755" y="36.5" width="4" height="25" fill="#c4c4c4"/>
<rect x="760" y="35.5" width="4" height="26" fill="#d6d6d6"/>
<rect x="765" y="34.5" width="4" height="27" fill="#c0c0c0"/>
<rect x="770" y="36.5" width="3.5" height="25" fill="#c8c8c8"/>
<circle cx="759.3" cy="54.2" r="7" fill="#f1f1f1" stroke="#a8a8a8" stroke-width="1.3"/>
<ellipse cx="759.3" cy="54.2" rx="3" ry="7" fill="none" stroke="#a8a8a8" stroke-width="1"/>
<line x1="752.3" y1="52" x2="766.3" y2="52" stroke="#a8a8a8" stroke-width="1"/>
<line x1="752.3" y1="56.5" x2="766.3" y2="56.5" stroke="#a8a8a8" stroke-width="1"/>
<line x1="795.7" y1="38.3" x2="825.7" y2="38.3" stroke="#b4b4b4" stroke-width="1.2"/>
<line x1="795.7" y1="56.3" x2="825.7" y2="56.3" stroke="#b4b4b4" stroke-width="1.2"/>
<line x1="799.4000000000001" y1="34.4" x2="799.4000000000001" y2="60.1" stroke="#b4b4b4" stroke-width="1.2"/>
<line x1="837.9" y1="38.3" x2="867.9" y2="38.3" stroke="#b4b4b4" stroke-width="1.2"/>
<line x1="837.9" y1="56.3" x2="867.9" y2="56.3" stroke="#b4b4b4" stroke-width="1.2"/>
<line x1="841.6" y1="34.4" x2="841.6" y2="60.1" stroke="#b4b4b4" stroke-width="1.2"/>
<line x1="884.3" y1="38.3" x2="914.3" y2="38.3" stroke="#b4b4b4" stroke-width="1.2"/>
<line x1="884.3" y1="56.3" x2="914.3" y2="56.3" stroke="#b4b4b4" stroke-width="1.2"/>
<line x1="888.0" y1="34.4" x2="888.0" y2="60.1" stroke="#b4b4b4" stroke-width="1.2"/>
<path d="M800,53 L807.9,43 L812.9,53 L820.7,42.3 L824.3,46.6" fill="none" stroke="#a8a8a8" stroke-width="1.3"/>
<rect x="843.6" y="45.9" width="3.5" height="8.5" fill="#a8a8a8"/>
<rect x="849.3" y="43" width="3.6" height="11.4" fill="#a8a8a8"/>
<rect x="855" y="48" width="3.6" height="6.4" fill="#a8a8a8"/>
<rect x="861" y="50.1" width="4" height="4.3" fill="#a8a8a8"/>
<rect x="889.3" y="40.9" width="2.8" height="5.7" fill="#a8a8a8"/>
<rect x="894.3" y="40.9" width="2.8" height="5.7" fill="#a8a8a8"/>
<rect x="908.1" y="40.9" width="2.8" height="5.7" fill="#a8a8a8"/>
<rect x="898.6" y="48" width="2.8" height="5.7" fill="#a8a8a8"/>
<rect x="903.3" y="48" width="2.8" height="5.7" fill="#a8a8a8"/>
<rect x="955" y="34" width="28" height="28" fill="#f6f6f6" stroke="#b4b4b4" stroke-width="1.3"/>
<rect x="955" y="34" width="28" height="3.5" fill="#a8a8a8"/>
<rect x="958" y="40" width="20" height="3" fill="#c9c9c9"/>
<rect x="958" y="45" width="10" height="3" fill="#c9c9c9"/>
<rect x="958" y="50" width="8" height="3" fill="#c9c9c9"/>
<rect x="958" y="55" width="9" height="3" fill="#c9c9c9"/>
<path d="M966,45 L982,45 L976,53 L976,62 L972,62 L972,53 Z" fill="#a8a8a8"/>
<rect x="1018" y="37.5" width="28" height="16" fill="#f6f6f6" stroke="#b4b4b4" stroke-width="1.3"/>
<rect x="1018" y="37.5" width="28" height="3" fill="#a8a8a8"/>
<rect x="1021" y="45" width="5" height="2.5" fill="#c9c9c9"/>
<rect x="1027" y="45" width="6" height="2.5" fill="#a8a8a8"/>
<rect x="1034" y="45" width="5" height="2.5" fill="#c9c9c9"/>
<path d="M1028,48 L1047,48 L1040,55 L1040,63.5 L1036,63.5 L1036,55 Z" fill="#a8a8a8"/>
<circle cx="1087" cy="45.5" r="11.5" fill="none" stroke="#b4b4b4" stroke-width="1.2"/>
<ellipse cx="1087" cy="45.5" rx="5" ry="11.5" fill="none" stroke="#b4b4b4" stroke-width="1"/>
<line x1="1075.5" y1="41.5" x2="1098.5" y2="41.5" stroke="#b4b4b4" stroke-width="1"/>
<line x1="1075.5" y1="49.5" x2="1098.5" y2="49.5" stroke="#b4b4b4" stroke-width="1"/>
<line x1="1087" y1="34" x2="1087" y2="57" stroke="#b4b4b4" stroke-width="1"/>
<rect x="1084" y="54" width="12" height="8" fill="#f1f1f1" stroke="#a8a8a8" stroke-width="2.4" rx="4"/>
<rect x="1093" y="54" width="12" height="8" fill="#f1f1f1" stroke="#a8a8a8" stroke-width="2.4" rx="4"/>
<rect x="1122.5" y="30.5" width="29" height="29" fill="#ffffff" stroke="#c6c6c6" stroke-width="1"/>
<text x="1132.2" y="51.3" font-size="14" fill="#4a78aa" font-weight="bold" textLength="10.5" lengthAdjust="spacingAndGlyphs" font-style="italic">A</text>
<text x="1168.5" y="46.0" font-size="15" fill="#b8b8b8" textLength="12.0" lengthAdjust="spacingAndGlyphs">π</text>
<text x="1168.5" y="69.0" font-size="14.5" fill="#b8b8b8" font-weight="bold" textLength="13.0" lengthAdjust="spacingAndGlyphs">Ω</text>
</svg></body></html>
